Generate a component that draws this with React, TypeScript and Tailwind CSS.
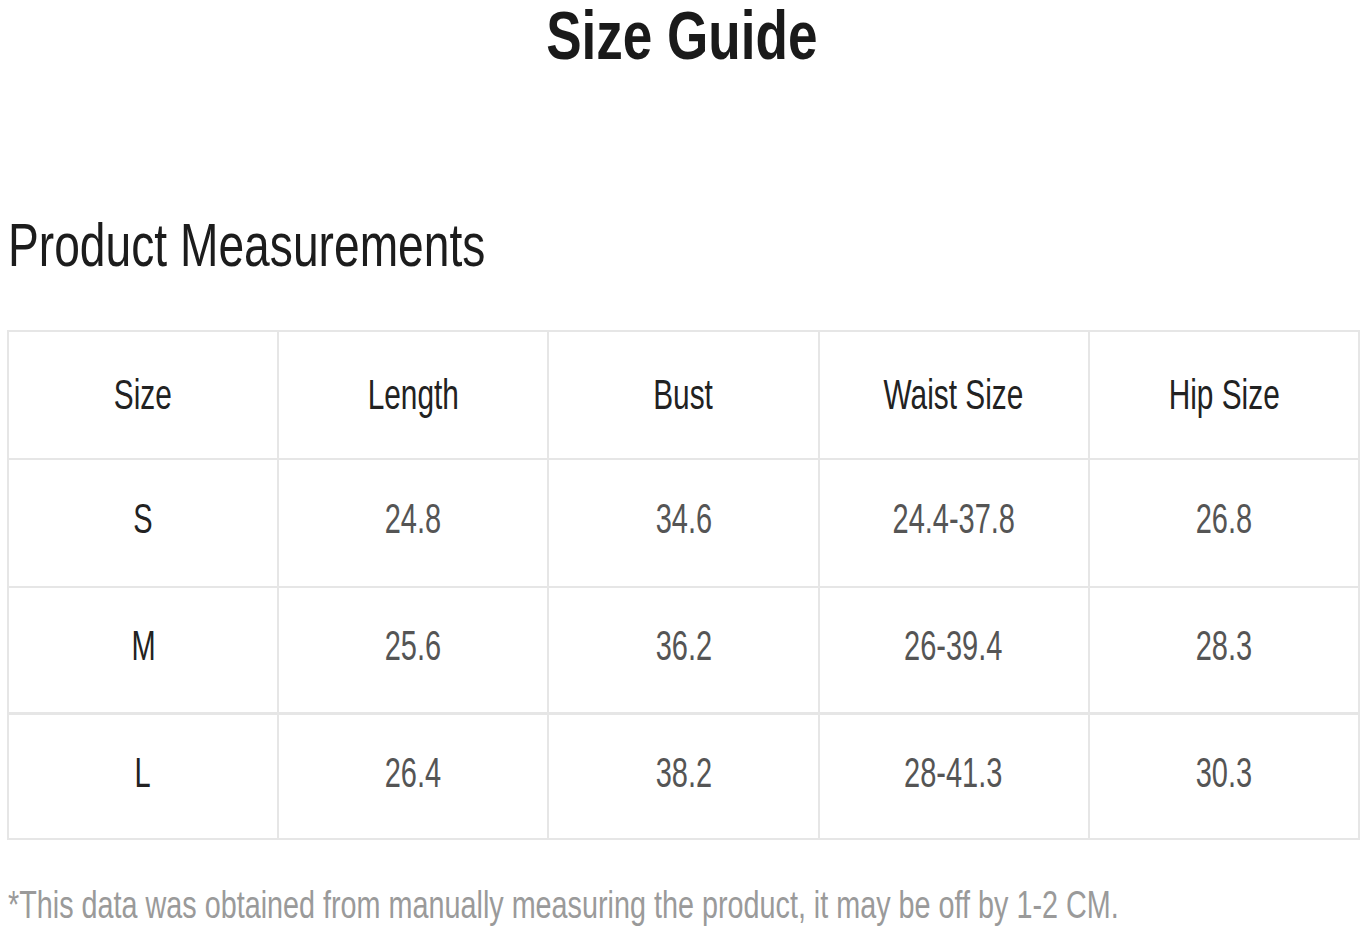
import React from 'react';

const headers = ['Size', 'Length', 'Bust', 'Waist Size', 'Hip Size'];

const rows = [
  ['S', '24.8', '34.6', '24.4-37.8', '26.8'],
  ['M', '25.6', '36.2', '26-39.4', '28.3'],
  ['L', '26.4', '38.2', '28-41.3', '30.3'],
];

const App: React.FC = () => {
  return (
    <div className="w-[1364px] h-[932px] bg-white overflow-hidden font-['Liberation_Sans',Arial,sans-serif]">
      <div className="text-center">
        <h1 className="inline-block scale-x-[0.78] text-[68px] leading-[1.05] font-bold text-[#1a1a1a]">
          Size Guide
        </h1>
      </div>

      <h2 className="mt-[144px] ml-[8px] origin-left scale-x-[0.757] text-[61px] leading-none text-[#1c1c1c] whitespace-nowrap">
        Product Measurements
      </h2>

      <table className="mt-[54px] ml-[7px] w-[1353px] border-collapse table-fixed">
        <thead>
          <tr className="h-[128px]">
            {headers.map(h => (
              <th key={h} className="border-2 border-[#e6e6e6] text-center align-middle font-normal">
                <span className="inline-block scale-x-[0.71] text-[42px] leading-none text-[#222] whitespace-nowrap">{h}</span>
              </th>
            ))}
          </tr>
        </thead>
        <tbody>
          {rows.map((r, i) => (
            <tr key={r[0]} className={i === 0 ? 'h-[128px]' : 'h-[126px]'}>
              {r.map((c, j) => (
                <td
                  key={j}
                  className={`border-2 ${i === 2 ? 'border-t-[3px]' : ''} border-[#e6e6e6] pb-[8px] text-center align-middle`}
                >
                  <span
                    className={`inline-block scale-x-[0.69] text-[42px] leading-none whitespace-nowrap ${
                      j === 0 ? 'text-[#222]' : 'text-[#555]'
                    }`}
                  >
                    {c}
                  </span>
                </td>
              ))}
            </tr>
          ))}
        </tbody>
      </table>

      <p className="mt-[46px] ml-[8px] origin-left scale-x-[0.757] text-[38px] leading-none text-[#9a9a9a] whitespace-nowrap">
        *This data was obtained from manually measuring the product, it may be off by 1-2 CM.
      </p>
    </div>
  );
};

export default App;
